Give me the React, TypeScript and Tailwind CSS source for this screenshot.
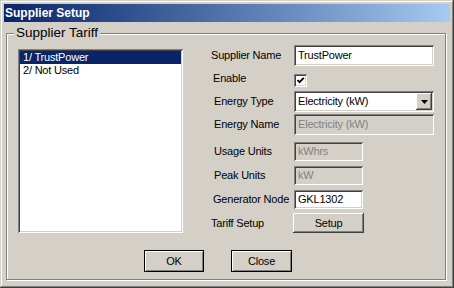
const sunken =
  'shadow-[inset_1px_1px_#808080,inset_-1px_-1px_#ffffff,inset_2px_2px_#404040,inset_-2px_-2px_#d4d0c8]';
const raised =
  'shadow-[inset_-1px_-1px_#404040,inset_1px_1px_#ffffff,inset_-2px_-2px_#808080,inset_2px_2px_#d4d0c8]';

function Field({ value, width, height, disabled }: { value: string; width: string; height: string; disabled?: boolean }) {
  return (
    <div
      className={`${width} ${height} ${sunken} flex items-center pl-[4px] ${
        disabled ? 'bg-[#d4d0c8] text-[#808080]' : 'bg-white text-black'
      }`}
    >
      {value}
    </div>
  );
}

export default function App() {
  return (
    <div className="w-[454px] h-[288px] bg-[#d4d0c8] p-[4px] font-['Liberation_Sans',Arial,sans-serif] text-[11px] tracking-[-0.2px] text-black shadow-[inset_-1px_-1px_#404040,inset_1px_1px_#d4d0c8,inset_-2px_-2px_#808080,inset_2px_2px_#ffffff]">
      <div className="h-[18px] flex items-center pl-[1px] bg-linear-to-r from-[#0a246a] to-[#a6caf0] text-white font-bold text-[12px] tracking-normal">
        Supplier Setup
      </div>

      <div className="relative mt-[11px] ml-[2px] w-[440px] h-[247px] border border-[#808080] shadow-[inset_1px_1px_#ffffff,1px_1px_#ffffff]">
        <span className="absolute -top-[9px] left-[7px] px-[2px] bg-[#d4d0c8] text-[13.5px] leading-[16px] tracking-normal">
          Supplier Tariff
        </span>

        <div className="flex items-start">
          {/* list */}
          <div className={`ml-[11px] mt-[15px] w-[165px] h-[184px] bg-white p-[2px] ${sunken}`}>
            <div className="h-[13px] leading-[13px] pl-[3px] bg-[#0a246a] text-white">1/ TrustPower</div>
            <div className="h-[13px] leading-[13px] pl-[3px]">2/ Not Used</div>
          </div>

          {/* form */}
          <div className="ml-[28px] mt-[11px] flex flex-col">
            <div className="flex items-center h-[21px]">
              <span className="w-[83px]">Supplier Name</span>
              <Field value="TrustPower" width="w-[140px]" height="h-[21px]" />
            </div>

            <div className="flex items-start h-[21px] mt-[2px]">
              <span className="w-[83px] pl-[2px] leading-[21px]">Enable</span>
              <div className={`mt-[6px] w-[13px] h-[13px] bg-white ${sunken} flex items-center justify-center`}>
                <svg width="9" height="9" viewBox="0 0 9 9">
                  <polyline points="1.5,4 3.5,6.2 7.8,1.8" fill="none" stroke="#000" strokeWidth="1.8" />
                </svg>
              </div>
            </div>

            <div className="flex items-center h-[21px] mt-[2px]">
              <span className="w-[83px] pl-[3px]">Energy Type</span>
              <div className={`w-[140px] h-[21px] bg-white ${sunken} flex items-center pl-[4px] pr-[2px]`}>
                <span className="flex-1">Electricity (kW)</span>
                <div className={`w-[16px] h-[17px] bg-[#d4d0c8] ${raised} flex items-center justify-center`}>
                  <svg width="7" height="4" viewBox="0 0 7 4">
                    <polygon points="0,0 7,0 3.5,4" fill="#000" />
                  </svg>
                </div>
              </div>
            </div>

            <div className="flex items-center h-[21px] mt-[2px]">
              <span className="w-[83px] pl-[3px]">Energy Name</span>
              <Field value="Electricity (kW)" width="w-[140px]" height="h-[21px]" disabled />
            </div>

            <div className="flex items-center h-[19px] mt-[7px]">
              <span className="w-[83px] pl-[3px]">Usage Units</span>
              <Field value="kWhrs" width="w-[69px]" height="h-[19px]" disabled />
            </div>

            <div className="flex items-center h-[19px] mt-[5px]">
              <span className="w-[83px] pl-[3px]">Peak Units</span>
              <Field value="kW" width="w-[69px]" height="h-[19px]" disabled />
            </div>

            <div className="flex items-center h-[19px] mt-[5px]">
              <span className="w-[83px] pl-[2px]">Generator Node</span>
              <Field value="GKL1302" width="w-[69px]" height="h-[19px]" />
            </div>

            <div className="flex items-center h-[20px] mt-[4px]">
              <span className="w-[82px]">Tariff Setup</span>
              <button className={`w-[71px] h-[20px] bg-[#d4d0c8] ${raised} text-[11px]`}>Setup</button>
            </div>
          </div>
        </div>

        <div className="flex mt-[17px] ml-[137px] gap-[27px]">
          <button className="w-[60px] h-[22px] border border-black bg-[#d4d0c8] shadow-[inset_1px_1px_#ffffff,inset_-1px_-1px_#808080] text-[11px]">
            OK
          </button>
          <button className="w-[61px] h-[22px] border border-black bg-[#d4d0c8] shadow-[inset_1px_1px_#ffffff,inset_-1px_-1px_#808080] text-[11px]">
            Close
          </button>
        </div>
      </div>
    </div>
  );
}
